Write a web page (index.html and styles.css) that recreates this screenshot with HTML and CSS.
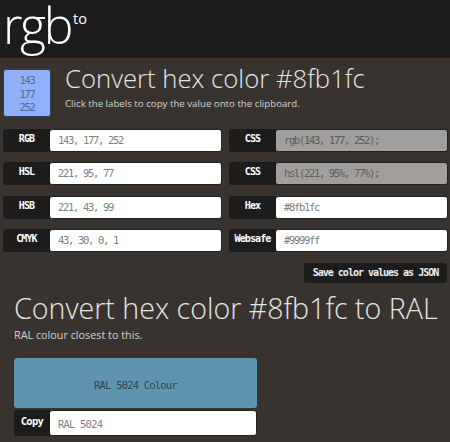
FILE: index.html
```html
<!DOCTYPE html>
<html lang="en">
<head>
<meta charset="utf-8">
<title>rgb.to</title>
<link rel="stylesheet" href="styles.css">
</head>
<body>
<header class="top">
  <span class="logo">rgb</span><span class="logo-to">to</span>
</header>
<main class="page">
  <section class="intro">
    <div class="swatch">143<br>177<br>252</div>
    <div class="intro-text">
      <h1 class="title">Convert hex color #8fb1fc</h1>
      <p class="sub">Click the labels to copy the value onto the clipboard.</p>
    </div>
  </section>
  <section class="grid">
    <div class="field"><span class="label">RGB</span><span class="value">143, 177, 252</span></div>
    <div class="field"><span class="label">CSS</span><span class="value grey">rgb(143, 177, 252);</span></div>
    <div class="field"><span class="label">HSL</span><span class="value">221, 95, 77</span></div>
    <div class="field"><span class="label">CSS</span><span class="value grey">hsl(221, 95%, 77%);</span></div>
    <div class="field"><span class="label">HSB</span><span class="value">221, 43, 99</span></div>
    <div class="field"><span class="label">Hex</span><span class="value">#8fb1fc</span></div>
    <div class="field"><span class="label">CMYK</span><span class="value">43, 30, 0, 1</span></div>
    <div class="field"><span class="label">Websafe</span><span class="value">#9999ff</span></div>
  </section>
  <div class="save-row"><span class="save">Save color values as JSON</span></div>
  <section class="ral">
    <h2 class="title">Convert hex color #8fb1fc to RAL</h2>
    <p class="sub">RAL colour closest to this.</p>
    <div class="ral-swatch">RAL 5024 Colour</div>
    <div class="field copy"><span class="label copy-label">Copy</span><span class="value">RAL 5024</span></div>
  </section>
</main>
</body>
</html>
```
FILE: styles.css
```css
* { box-sizing: border-box; }
html, body { margin: 0; height: 442px; overflow: hidden; }
body { background: #38332f; color: #e4e4e4; font-family: "Open Sans", sans-serif; }
.top { height: 58px; background: #1c1c1c; padding-left: 3px; display: flex; align-items: flex-start; }
.logo { font-size: 50px; font-weight: 300; line-height: 50px; color: #fff; letter-spacing: -2.4px; }
.logo-to { font-size: 14.5px; font-weight: 500; line-height: 16px; margin: 11px 0 0 2px; color: #fff; }
.page { padding: 11px 3px 0; }
.intro { display: flex; gap: 14px; }
.swatch { width: 48px; height: 48px; background: #8fb1fc; border: 1px solid #333c50; border-radius: 3px; color: #56678c; font: 10.5px/13.5px "DejaVu Sans Mono", monospace; letter-spacing: -1.3px; text-align: center; padding-top: 4px; }
.title { margin: 0; font-size: 25.7px; font-weight: 300; line-height: 20px; color: #e6e6e6; white-space: nowrap; }
.sub { margin: 6.5px 0 0; font-size: 9.7px; line-height: 15px; color: #d4d4d4; white-space: nowrap; }
.grid { display: grid; grid-template-columns: 219px 219px; column-gap: 7px; row-gap: 10.33px; margin-top: 12px; }
.field { display: flex; height: 23px; }
.label { width: 47px; flex: none; background: #1c1c1c; border-radius: 3px 0 0 3px; color: #fff; font: bold 10px/20px "DejaVu Sans Mono", monospace; letter-spacing: -0.9px; text-align: center; }
.value { flex: 1; background: #fff; border-radius: 3px; border: 1px solid #222; border-left: 0; color: #808080; font: 10.5px/21px "DejaVu Sans Mono", monospace; letter-spacing: -1.32px; padding-left: 8px; }
.grey { background: #a09f9e; color: #5c5c5c; }
.save-row { display: flex; justify-content: flex-end; margin-top: 11px; }
.save { width: 143px; height: 20px; background: #1c1c1c; border-radius: 3px; color: #eee; font: bold 10px/19px "DejaVu Sans Mono", monospace; letter-spacing: -1px; text-align: center; }
.ral { padding: 7px 0 0 11px; }
.ral .title { font-size: 28.6px; line-height: 36px; }
.ral .sub { margin-top: 1px; font-size: 10.8px; line-height: 16px; }
.ral-swatch { width: 243px; height: 50px; margin-top: 15px; padding-top: 2px; background: #5f94ae; border-radius: 3px; color: #2f4350; font: 10.5px/50px "DejaVu Sans Mono", monospace; letter-spacing: -0.8px; text-align: center; }
.copy { width: 243px; height: 26px; margin-top: 2px; }
.copy-label { width: 36px; font-size: 10.5px; line-height: 22px; letter-spacing: -0.7px; }
.copy .value { font-size: 10.5px; letter-spacing: -0.8px; line-height: 26px; }
```
